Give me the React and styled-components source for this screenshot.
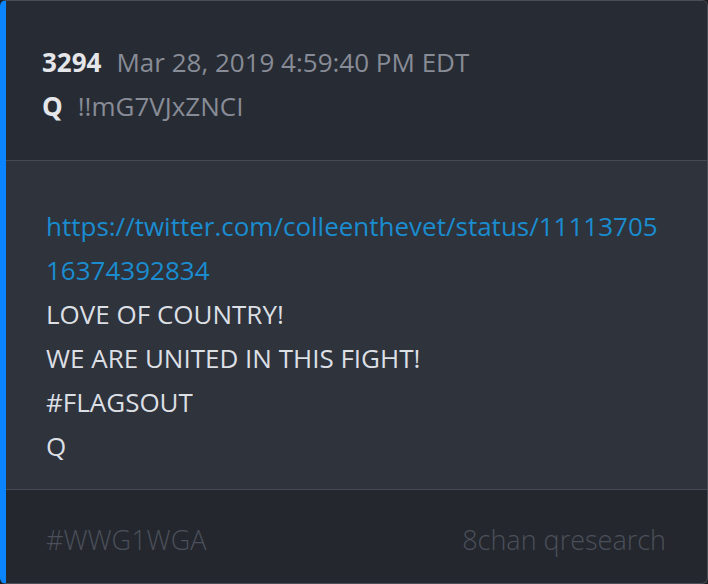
import React from "react";
import styled, {createGlobalStyle} from "styled-components";

const post = {
    number: 3294,
    date: "Mar 28, 2019 4:59:40 PM EDT",
    author: "Q",
    trip: "!!mG7VJxZNCI",
    link: "https://twitter.com/colleenthevet/status/1111370516374392834",
    lines: ["LOVE OF COUNTRY!", "WE ARE UNITED IN THIS FIGHT!", "#FLAGSOUT", "Q"],
    tag: "#WWG1WGA",
    source: "8chan qresearch",
};

const App = () => {
  return (
    <>
        <GlobalStyle/>
        <Card>
            <Header>
                <MetaRow>
                    <Strong>{post.number}</Strong>
                    <Muted>{post.date}</Muted>
                </MetaRow>
                <MetaRow>
                    <Strong>{post.author}</Strong>
                    <Muted>{post.trip}</Muted>
                </MetaRow>
            </Header>
            <Body>
                <Link href={post.link}>{post.link}</Link>
                {post.lines.map((line, i) => (
                    <Line key={i}>{line}</Line>
                ))}
            </Body>
            <Footer>
                <FooterText>{post.tag}</FooterText>
                <FooterText>{post.source}</FooterText>
            </Footer>
        </Card>
    </>
  )
}

const GlobalStyle = createGlobalStyle`
  * { box-sizing: border-box; }
  body {
    margin: 0;
    background: #1c1f24;
    font-family: "Open Sans", "Noto Sans", sans-serif;
  }
`;

const Card = styled.div`
  width: 708px;
  height: 584px;
  display: flex;
  flex-direction: column;
  border: 1px solid #4a4e57;
  border-left: 6px solid #0a84ff;
  border-radius: 6px;
  overflow: hidden;
  background: #24272e;
`;

const Header = styled.div`
  background: #272b33;
  padding: 39px 36px 32px;
  border-bottom: 1px solid #454a54;
`;

const MetaRow = styled.div`
  display: flex;
  align-items: baseline;
  gap: 15px;
  height: 44px;
  line-height: 44px;
  font-size: 26px;
`;

const Strong = styled.span`
  font-weight: 700;
  color: #e4e6ea;
`;

const Muted = styled.span`
  color: #878c97;
`;

const Body = styled.div`
  background: #2e333c;
  padding: 43px 40px 21px;
  border-bottom: 1px solid #454a54;
  font-size: 26px;
  line-height: 44px;
`;

const Link = styled.a`
  display: block;
  color: #1a8ccf;
  text-decoration: none;
  word-break: break-all;
`;

const Line = styled.div`
  color: #dcdfe4;
`;

const Footer = styled.div`
  flex: 1;
  display: flex;
  justify-content: space-between;
  align-items: center;
  padding: 6px 41px 0 40px;
`;

const FooterText = styled.span`
  font-size: 27px;
  font-weight: 300;
  color: #4b505a;
`;

export default App;
